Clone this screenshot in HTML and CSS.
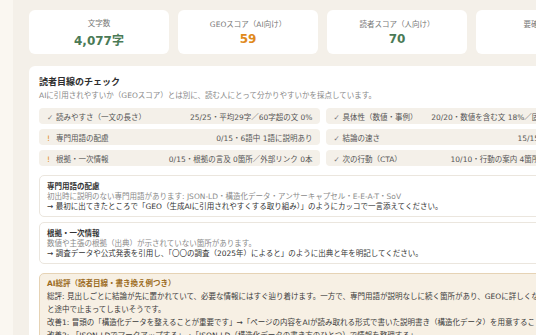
FILE: index.html
```html
<!DOCTYPE html>
<html lang="ja">
<head>
<meta charset="UTF-8">
<meta name="viewport" content="width=device-width, initial-scale=1.0">
<title>読者目線のチェック</title>
<link rel="stylesheet" href="styles.css">
</head>
<body>
<div class="page">
    <div class="stats">
        <div class="stat">
            <div class="stat-label">文字数</div>
            <div class="stat-value green">4,077字</div>
        </div>
        <div class="stat">
            <div class="stat-label">GEOスコア（AI向け）</div>
            <div class="stat-value orange">59</div>
        </div>
        <div class="stat">
            <div class="stat-label">読者スコア（人向け）</div>
            <div class="stat-value green">70</div>
        </div>
        <div class="stat">
            <div class="stat-label">要確認の項目</div>
            <div class="stat-value orange">2</div>
        </div>
    </div>

    <div class="panel">
        <h2>読者目線のチェック</h2>
        <p class="sub">AIに引用されやすいか（GEOスコア）とは別に、読む人にとって分かりやすいかを採点しています。</p>

        <div class="checks">
            <div class="check"><span><span class="mark ok">✓</span>読みやすさ（一文の長さ）</span><span>25/25・平均29字／60字超の文 0%</span></div>
            <div class="check"><span><span class="mark ok">✓</span>具体性（数値・事例）</span><span>20/20・数値を含む文 18%／固有名詞・事例 7件</span></div>
            <div class="check"><span><span class="mark warn">!</span>専門用語の配慮</span><span>0/15・6語中 1語に説明あり</span></div>
            <div class="check"><span><span class="mark ok">✓</span>結論の速さ</span><span>15/15・冒頭に結論あり</span></div>
            <div class="check"><span><span class="mark warn">!</span>根拠・一次情報</span><span>0/15・根拠の言及 0箇所／外部リンク 0本</span></div>
            <div class="check"><span><span class="mark ok">✓</span>次の行動（CTA）</span><span>10/10・行動の案内 4箇所／関連リンク 3本</span></div>
        </div>

        <div class="issue">
            <div class="issue-title">専門用語の配慮</div>
            <div class="issue-note">初出時に説明のない専門用語があります: JSON-LD・構造化データ・アンサーキャプセル・E-E-A-T・SoV</div>
            <div class="issue-fix">→ 最初に出てきたところで「GEO（生成AIに引用されやすくする取り組み）」のようにカッコで一言添えてください。</div>
        </div>
        <div class="issue">
            <div class="issue-title">根拠・一次情報</div>
            <div class="issue-note">数値や主張の根拠（出典）が示されていない箇所があります。</div>
            <div class="issue-fix">→ 調査データや公式発表を引用し、「〇〇の調査（2025年）によると」のように出典と年を明記してください。</div>
        </div>

        <div class="review">
            <div class="review-title">AI総評（読者目線・書き換え例つき）</div>
            <p>総評: 見出しごとに結論が先に置かれていて、必要な情報にはすぐ辿り着けます。一方で、専門用語が説明なしに続く箇所があり、GEOに詳しくない読者だ<br>と途中で止まってしまいそうです。</p>
            <p>改善1: 冒頭の「構造化データを整えることが重要です」→「ページの内容をAIが読み取れる形式で書いた説明書き（構造化データ）を用意することが大切です」</p>
            <p>改善2: 「JSON-LDでマークアップする」→「JSON-LD（構造化データの書き方のひとつ）で情報を整理する」</p>
        </div>
    </div>
</div>
</body>
</html>
```

FILE: styles.css
```css
html, body {
    overflow: hidden;
}
body {
    margin: 0;
    background-color: #faf7f1;
    font-family: "DejaVu Sans", "Noto Sans CJK JP", sans-serif;
    font-size: 7.5px;
    color: #3a3a3a;
}
.page {
    width: 587px;
    margin-left: 13px;
    padding: 10px 16px 20px;
    background-color: #f4f0e9;
}
.stats {
    display: grid;
    grid-template-columns: repeat(4, 140px);
    gap: 9px;
}
.stat {
    background-color: #fff;
    border-radius: 6px;
    height: 44px;
    display: flex;
    flex-direction: column;
    align-items: center;
    justify-content: center;
    gap: 3px;
}
.stat-label {
    color: #777;
    font-size: 7.5px;
}
.stat-value {
    font-size: 12px;
    font-weight: bold;
}
.green {
    color: #4a7a56;
}
.orange {
    color: #e08a1c;
}
.panel {
    margin-top: 12px;
    background-color: #fff;
    border-radius: 6px;
    padding: 9px 10px 10px;
}
h2 {
    margin: 0;
    font-size: 9px;
    line-height: 14px;
    color: #2e2e2e;
}
.sub {
    margin: 1px 0 6px;
    color: #888;
    line-height: 12px;
}
.checks {
    display: grid;
    grid-template-columns: minmax(0, 1fr) minmax(0, 1fr);
    gap: 5px 6px;
}
.check {
    display: flex;
    justify-content: space-between;
    align-items: center;
    height: 16px;
    padding: 0 7px 0 8px;
    background-color: #f4f0e9;
    border-radius: 4px;
    color: #555;
    white-space: nowrap;
}
.mark {
    display: inline-block;
    width: 9px;
}
.mark.ok {
    color: #777;
}
.mark.warn {
    color: #e08a1c;
}
.issue {
    margin-top: 5px;
    border: 1px solid #ebe6de;
    border-radius: 5px;
    padding: 5px 7px 4px;
    line-height: 10px;
}
.checks + .issue {
    margin-top: 9px;
}
.issue-title {
    font-weight: bold;
    color: #333;
    line-height: 11px;
}
.issue-note {
    color: #8a8a8a;
}
.issue-fix {
    color: #333;
}
.review {
    margin-top: 9px;
    background-color: #f7f0e4;
    border: 1px solid #e6d3b5;
    border-radius: 5px;
    padding: 3px 7px;
    line-height: 13px;
}
.review-title {
    font-weight: bold;
    color: #9c6b22;
}
.review p {
    margin: 0;
    color: #3a3a3a;
}
```
